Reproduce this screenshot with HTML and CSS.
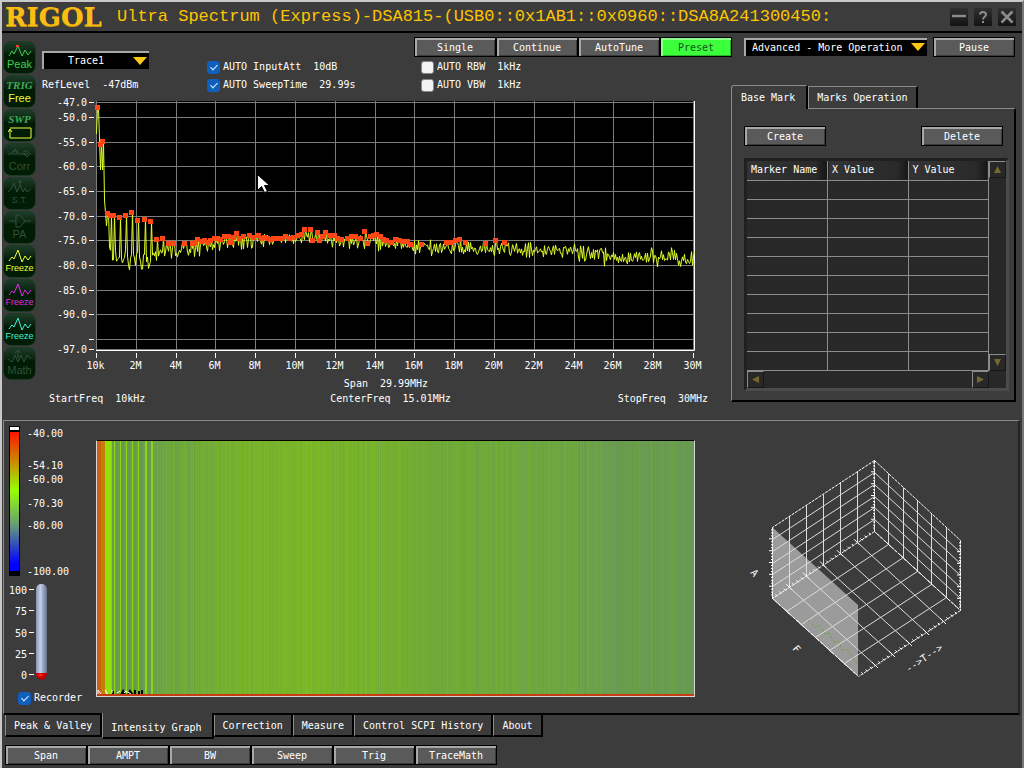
FILE: index.html
```
<!DOCTYPE html>
<html lang="en">
<head>
    <meta charset="UTF-8">
    <meta name="viewport" content="width=device-width, initial-scale=1.0">
    <title>Ultra Spectrum (Express)</title>
    <link rel="stylesheet" href="styles.css">
</head>
<body>
<div class="window">

    <header class="titlebar">
        <div class="logo">RIGOL</div>
        <h1>Ultra Spectrum (Express)-DSA815-(USB0::0x1AB1::0x0960::DSA8A241300450:</h1>
        <div class="window-buttons">
            <button aria-label="Minimize"><svg viewBox="0 0 18 18"><path d="M2 8h14" stroke-width="2.500"/></svg></button>
            <button aria-label="Help"><svg viewBox="0 0 18 18"><path d="M6 6.500C6 3 12 3 12 6.500C12 9 9 8.500 9 11.500M9 13v2" stroke-width="2"/></svg></button>
            <button aria-label="Close"><svg viewBox="0 0 18 18"><path d="M3.500 3.500l11 11M14.500 3.500l-11 11" stroke-width="2.500"/></svg></button>
        </div>
    </header>

    <main class="upper">
        <nav class="sidebar">
            <button class="side green"><svg viewBox="0 0 24 14"><path d="M1 12L4 7L6 10L10 2L14 12L17 6L20 11L23 7"/><path class="dot" d="M8 2h3"/></svg><span>Peak</span></button>
            <button class="side yellow"><em>TRIG</em><span>Free</span></button>
            <button class="side yellow"><em>SWP</em><svg viewBox="0 0 24 14"><path d="M2 12V3M0 6L2 3L4 6M2 2H23V12H2"/></svg></button>
            <button class="side off"><svg viewBox="0 0 24 14"><path d="M0 8H3L7 3L11 8H16L19 11L23 7M5 5h4v3h-4zM16 5h4v3h-4z"/></svg><span>Corr</span></button>
            <button class="side off"><svg viewBox="0 0 24 14"><path d="M0 12L3 9L6 3L9 12L12 5L15 12L17 8L19 12L23 9M12 0V5M10 2h4"/></svg><span class="tiny">S.T.</span></button>
            <button class="side off"><svg viewBox="0 0 24 14"><path d="M1 7H8M8 1V13H12L17 7L12 1ZM17 7H23"/></svg><span>PA</span></button>
            <button class="side yellow"><svg viewBox="0 0 24 14"><path d="M1 12L4 8L6 10L10 1L14 13L17 7L20 11L23 7"/></svg><span class="small">Freeze</span></button>
            <button class="side magenta"><svg viewBox="0 0 24 14"><path d="M1 12L4 8L6 10L10 1L14 13L17 7L20 11L23 7"/></svg><span class="small">Freeze</span></button>
            <button class="side cyan"><svg viewBox="0 0 24 14"><path d="M1 12L4 8L6 10L10 1L14 13L17 7L20 11L23 7"/></svg><span class="small">Freeze</span></button>
            <button class="side off"><svg viewBox="0 0 24 14"><path d="M0 9L4 12L7 5L10 12L13 5L16 12L19 5L23 9M10 0V8M7 3L10 0L13 3"/></svg><span>Math</span></button>
        </nav>

        <section class="trace">
            <div class="controls">
                <div class="trace-pick">
                    <div class="dropdown">
                        <select aria-label="Trace"><option>Trace1</option></select>
                    </div>
                    <p>RefLevel&nbsp; -47dBm</p>
                </div>
                <div class="auto-list">
                    <label><input type="checkbox" checked>AUTO InputAtt&nbsp; 10dB</label>
                    <label><input type="checkbox" checked>AUTO SweepTime&nbsp; 29.99s</label>
                </div>
                <div class="run-controls">
                    <div class="button-row">
                        <button class="btn">Single</button>
                        <button class="btn">Continue</button>
                        <button class="btn">AutoTune</button>
                        <button class="btn preset">Preset</button>
                    </div>
                    <label><input type="checkbox">AUTO RBW&nbsp; 1kHz</label>
                    <label><input type="checkbox">AUTO VBW&nbsp; 1kHz</label>
                </div>
            </div>
            <svg id="spectrum" class="spectrum" viewBox="41 94 690 280"></svg>
            <p class="span-text">Span&nbsp; 29.99MHz</p>
            <div class="freq-row">
                <span>StartFreq&nbsp; 10kHz</span>
                <span class="center-freq">CenterFreq&nbsp; 15.01MHz</span>
                <span>StopFreq&nbsp; 30MHz</span>
            </div>
        </section>

        <section class="marks">
            <div class="more-row">
                <div class="dropdown">
                    <select aria-label="More operation"><option>Advanced - More Operation</option></select>
                </div>
                <button class="btn">Pause</button>
            </div>
            <div class="mark-tabs">
                <button class="active">Base Mark</button>
                <button>Marks Operation</button>
            </div>
            <div class="mark-panel">
                <div class="mark-actions">
                    <button class="btn">Create</button>
                    <button class="btn">Delete</button>
                </div>
                <div class="table-frame">
                    <table>
                        <thead>
                            <tr><th>Marker Name</th><th>X Value</th><th>Y Value</th></tr>
                        </thead>
                        <tbody>
                            <tr><td></td><td></td><td></td></tr>
                            <tr><td></td><td></td><td></td></tr>
                            <tr><td></td><td></td><td></td></tr>
                            <tr><td></td><td></td><td></td></tr>
                            <tr><td></td><td></td><td></td></tr>
                            <tr><td></td><td></td><td></td></tr>
                            <tr><td></td><td></td><td></td></tr>
                            <tr><td></td><td></td><td></td></tr>
                            <tr><td></td><td></td><td></td></tr>
                            <tr><td></td><td></td><td></td></tr>
                        </tbody>
                    </table>
                    <div class="scroll vertical">
                        <button aria-label="Scroll up"><svg viewBox="0 0 8 8"><path d="M4 0L8 8H0Z"/></svg></button>
                        <button aria-label="Scroll down"><svg viewBox="0 0 8 8"><path d="M4 8L8 0H0Z"/></svg></button>
                    </div>
                    <div class="scroll horizontal">
                        <button aria-label="Scroll left"><svg viewBox="0 0 8 8"><path d="M0 4L8 0V8Z"/></svg></button>
                        <button aria-label="Scroll right"><svg viewBox="0 0 8 8"><path d="M8 4L0 0V8Z"/></svg></button>
                    </div>
                </div>
            </div>
        </section>
    </main>

    <section class="intensity">
        <div class="scales">
            <svg class="scale-art" viewBox="4 426 86 260">
                <defs>
                    <linearGradient id="ramp" x1="0" y1="0" x2="0" y2="1">
                        <stop offset="0" stop-color="#ff1400"/>
                        <stop offset="0.420" stop-color="#96ff00"/>
                        <stop offset="0.680" stop-color="#64967d"/>
                        <stop offset="0.950" stop-color="#0000ff"/>
                    </linearGradient>
                    <linearGradient id="tube">
                        <stop offset="0" stop-color="#8893ad"/>
                        <stop offset="0.400" stop-color="#c2cfea"/>
                        <stop offset="1" stop-color="#66708a"/>
                    </linearGradient>
                    <radialGradient id="bulb" cx="0.400" cy="0.300">
                        <stop offset="0" stop-color="#ff4040"/>
                        <stop offset="0.500" stop-color="#e00000"/>
                        <stop offset="1" stop-color="#b00000"/>
                    </radialGradient>
                </defs>
                <rect x="9" y="427" width="11" height="150"/>
                <rect x="10" y="428" width="9" height="3" fill="#fff"/>
                <rect x="10" y="433" width="9" height="139" fill="url(#ramp)"/>
                <g class="labels">
                    <text x="27" y="438">-40.00</text>
                    <text x="27" y="470">-54.10</text>
                    <text x="27" y="484">-60.00</text>
                    <text x="27" y="508">-70.30</text>
                    <text x="27" y="530">-80.00</text>
                    <text x="27" y="576">-100.00</text>
                </g>
                <rect x="36" y="585" width="11" height="94" rx="5" fill="url(#tube)"/>
                <path d="M36 674h11c0 9-11 9-11 0z" fill="url(#bulb)"/>
                <g class="labels end">
                    <text x="27" y="595">100</text>
                    <text x="27" y="616">75</text>
                    <text x="27" y="638">50</text>
                    <text x="27" y="659">25</text>
                    <text x="27" y="680">0</text>
                </g>
                <path class="ticks" d="M29 590.500h5M29 611.500h5M29 633.500h5M29 654.500h5M29 675.500h5"/>
            </svg>
            <label class="recorder"><input type="checkbox" checked>Recorder</label>
        </div>
        <svg id="waterfall" class="waterfall" viewBox="0 0 597 255" preserveAspectRatio="none"></svg>
        <svg id="cube" class="cube" viewBox="740 440 240 250"></svg>
    </section>

    <nav class="page-tabs">
        <button>Peak &amp; Valley</button>
        <button class="active">Intensity Graph</button>
        <button>Correction</button>
        <button>Measure</button>
        <button>Control SCPI History</button>
        <button>About</button>
    </nav>

    <footer class="button-row menu-row">
        <button class="btn">Span</button>
        <button class="btn">AMPT</button>
        <button class="btn">BW</button>
        <button class="btn">Sweep</button>
        <button class="btn">Trig</button>
        <button class="btn">TraceMath</button>
    </footer>
</div>

<script src="app.js"></script>
</body>
</html>
```
FILE: styles.css
```
* {
    box-sizing: border-box;
}

body {
    margin: 0;
    background: #3c3c3c;
    color: #fff;
    font-family: "DejaVu Sans Mono", "Liberation Mono", monospace;
    font-size: 10px;
    line-height: 14px;
}

button,
select,
input {
    font: inherit;
    color: inherit;
    margin: 0;
}

p {
    margin: 0;
}

.window {
    display: flex;
    flex-direction: column;
    min-height: 100vh;
    border: 2px solid #c8c8c8;
    border-right-color: #777;
    border-bottom-color: #777;
}

/* Title bar */
.titlebar {
    display: flex;
    align-items: center;
    height: 31px;
    padding: 0 6px 0 3px;
    border-bottom: 2px solid #000;
}

.logo {
    width: 112px;
    color: #f9bd14;
    font: bold 26px/28px "DejaVu Serif", "Liberation Serif", serif;
    text-shadow: 0 1px 0 #c8930c;
}

.titlebar h1 {
    flex: 1;
    margin: 0;
    color: #ffc400;
    font: 17px/26px "Liberation Mono", monospace;
    white-space: nowrap;
}

.window-buttons {
    display: flex;
    gap: 6px;
}

.window-buttons button {
    width: 18px;
    height: 18px;
    padding: 0;
    border: 0;
    background: linear-gradient(#303030, #141414);
}

.window-buttons svg {
    display: block;
    fill: none;
    stroke: #8c8c8c;
}

/* Shared controls */
.btn {
    width: 82px;
    height: 20px;
    padding: 2px 0 0;
    border: 1px solid #000;
    background: #5a5a5a;
    box-shadow: inset 2px 2px 0 #a8a8a8, inset -1px -1px 0 #3a3a3a;
    line-height: 16px;
    text-align: center;
}

.btn.preset {
    width: 72px;
    background: #3cff3c;
    box-shadow: inset 2px 2px 0 #8dff8d, inset -1px -1px 0 #28b428;
    color: #14501e;
}

.button-row {
    display: flex;
}

.dropdown {
    position: relative;
}

.dropdown select {
    display: block;
    width: 100%;
    height: 18px;
    padding: 0 20px 0 6px;
    appearance: none;
    border: 0 solid #a8a8a8;
    border-width: 2px 0 0 2px;
    border-radius: 0;
    background: #000;
}

.dropdown::after {
    content: "";
    position: absolute;
    top: 6px;
    right: 2px;
    width: 14px;
    height: 8px;
    background: #ffc814;
    clip-path: polygon(0 0, 100% 0, 50% 100%);
    pointer-events: none;
}

label {
    display: flex;
    align-items: center;
    height: 18px;
    white-space: pre;
}

input[type="checkbox"] {
    appearance: none;
    width: 13px;
    height: 13px;
    margin-right: 3px;
    border: 1px solid #888;
    border-radius: 3px;
    background: #f3f3f3;
    position: relative;
}

input[type="checkbox"]:checked {
    border-color: #0f5fbd;
    background: #0f5fbd;
}

input[type="checkbox"]:checked::after {
    content: "";
    position: absolute;
    left: 4px;
    top: 1px;
    width: 3px;
    height: 6px;
    border: solid #dfefff;
    border-width: 0 1px 1px 0;
    transform: rotate(45deg);
}

/* Upper area */
.upper {
    display: flex;
    padding-right: 6px;
}

.sidebar {
    display: flex;
    flex-direction: column;
    gap: 1px;
    width: 39px;
    padding: 8px 0 0 1px;
}

.side {
    display: flex;
    flex-direction: column;
    align-items: center;
    justify-content: center;
    width: 33px;
    height: 33px;
    padding: 0;
    border: 1px solid #1c3a24;
    border-radius: 8px;
    background: linear-gradient(#1d3c27, #0a2411 35%, #001c04 40%, #001c04);
    font: 11px/13px "Liberation Sans", Arial, sans-serif;
}

.side svg {
    width: 24px;
    height: 14px;
    fill: none;
    stroke: currentColor;
}

.side .dot {
    stroke: #ff3c28;
    stroke-width: 2;
}

.side em {
    color: #3fa957;
    font: italic bold 11px/14px "Liberation Serif", serif;
}

.side .small {
    font-size: 9px;
    line-height: 11px;
}

.side .tiny {
    font-size: 9px;
}

.side.green { color: #3fce4c; }
.side.yellow { color: #eeff3c; }
.side.magenta { color: #e628e6; }
.side.cyan { color: #46f0dc; }
.side.off { color: #2f5237; }

.trace {
    flex: 1;
    min-width: 0;
}

.controls {
    display: flex;
    height: 61px;
}

.trace-pick {
    flex: none;
    width: 166px;
    padding: 18px 58px 0 1px;
}

.trace-pick .dropdown select {
    padding-left: 24px;
}

.trace-pick p {
    margin-top: 9px;
    white-space: nowrap;
}

.auto-list {
    flex: none;
    width: 207px;
    padding-top: 25px;
}

.run-controls {
    padding-top: 4px;
}

.run-controls .button-row {
    margin-bottom: 1px;
}

.run-controls label {
    padding-left: 7px;
}

.spectrum {
    display: block;
    width: 100%;
    height: auto;
}

text {
    fill: #fff;
    font-size: 10px;
}

.end text {
    text-anchor: end;
}

.middle text {
    text-anchor: middle;
}

.ticks,
.edge {
    fill: none;
    stroke: #fff;
}

.grid {
    fill: none;
    stroke: #7d7d7d;
    shape-rendering: crispEdges;
}

.signal {
    fill: none;
    stroke: #e1ff28;
}

.peaks {
    fill: #ff4614;
}

.span-text {
    padding-top: 3px;
    text-align: center;
}

.freq-row {
    display: flex;
    justify-content: space-between;
    padding: 1px 23px 0 8px;
}

.center-freq {
    padding-left: 18px;
}

/* Marker panel */
.marks {
    width: 285px;
}

.more-row {
    display: flex;
    gap: 6px;
    padding: 4px 1px 0 13px;
}

.more-row .dropdown {
    flex: 1;
}

.more-row .dropdown select {
    margin-top: 1px;
}

.mark-tabs {
    display: flex;
    align-items: flex-end;
    margin-top: 28px;
}

.mark-tabs button {
    position: relative;
    height: 22px;
    padding: 0 8px;
    border: 1px solid #8c8c8c;
    border-right: 2px solid #000;
    border-bottom: 0;
    background: #3c3c3c;
}

.mark-tabs .active {
    z-index: 1;
    height: 24px;
    margin-bottom: -1px;
    padding: 0 11px 0 9px;
    border-radius: 3px 0 0;
}

.mark-panel {
    padding: 17px 5px 9px 12px;
    border: 1px solid #8c8c8c;
    border-right: 2px solid #000;
    border-bottom: 2px solid #000;
}

.mark-actions {
    display: flex;
    justify-content: space-between;
    margin-bottom: 12px;
    padding-right: 6px;
}

.table-frame {
    display: grid;
    grid-template-columns: 1fr 17px;
    border: solid #202020;
    border-width: 3px;
    border-right-color: #4b4b4b;
    border-bottom-color: #4b4b4b;
    background: #282828;
}

table {
    width: 100%;
    border-collapse: collapse;
    table-layout: fixed;
}

th,
td {
    height: 19px;
    padding: 0 4px;
    border: 1px solid #8c8c8c;
    border-top: 0;
    border-left: 0;
    font-weight: normal;
    text-align: left;
    white-space: nowrap;
}

th {
    background: linear-gradient(90deg, #333, #2a2a2a 85%, #161616);
}

.scroll {
    display: flex;
    justify-content: space-between;
}

.vertical {
    flex-direction: column;
}

.scroll button {
    width: 17px;
    height: 17px;
    padding: 4px;
    border: solid #161616;
    border-width: 1px;
    border-top-color: #8c8c8c;
    border-left-color: #8c8c8c;
    background: #282828;
}

.scroll svg {
    display: block;
    fill: #75692f;
}

/* Intensity page */
.intensity {
    display: flex;
    align-items: flex-start;
    height: 295px;
    margin: 14px 2px 0 1px;
    padding: 4px 38px 0 0;
    border-top: 1px solid #8c8c8c;
    border-left: 1px solid #8c8c8c;
    border-right: 2px solid #222;
    border-bottom: 2px solid #000;
}

.scales {
    width: 92px;
}

.scale-art {
    display: block;
    width: 86px;
    height: 260px;
}

.recorder {
    margin-top: 4px;
    padding-left: 14px;
}

.waterfall {
    flex: 1;
    min-width: 0;
    height: 257px;
    margin-top: 15px;
    border: 1px solid #d7d7d7;
    border-top-color: #000;
}

.cube {
    width: 240px;
    height: 250px;
    margin: 15px 0 0 45px;
}

.wall {
    fill: none;
    stroke: #dcdcdc;
}

.edge {
    stroke-dasharray: 3 1;
}

/* Bottom tabs */
.page-tabs {
    display: flex;
    align-items: flex-start;
    padding-left: 3px;
    height: 24px;
}

.page-tabs button {
    height: 22px;
    padding: 2px 8px 0;
    border: solid #000;
    border-width: 0 2px 2px 1px;
    border-left-color: #8c8c8c;
    background: #3c3c3c;
}

.page-tabs .active {
    position: relative;
    height: 26px;
    margin-top: -2px;
    padding-top: 6px;
    padding-right: 10px;
}

.menu-row {
    padding: 6px 0 3px 3px;
}

/* Mouse pointer */
.pointer {
    fill: #fff;
    stroke: #000;
}
```
FILE: app.js
```
// small repeatable noise source
let seed = 815;
function noise() {
    seed = (seed * 16807) % 2147483647;
    return seed / 2147483647 - 0.5;
}

const floor = [[96, 250], [156, 251], [190, 248], [230, 242], [310, 239], [380, 242], [430, 247], [500, 247], [560, 250], [620, 256], [694, 258]];
const head = [[96, 134], [97, 108], [98, 108], [100, 170], [101, 144], [102, 170], [103, 141], [104, 200], [106, 226], [107, 213]];
const spikes = [[108, 213], [111, 215], [114, 215], [120, 217], [126, 215], [132, 212], [138, 220], [145, 219], [151, 221]];
const peaks = [[98, 107], [101, 144], [103, 141], [108, 213], [111, 215], [114, 215], [120, 217], [126, 215], [132, 212], [138, 220],
    [145, 219], [151, 221], [157, 239], [163, 238], [169, 243], [174, 243], [185, 243], [193, 243], [196, 242], [198, 239],
    [202, 241], [205, 240], [208, 242], [211, 240], [215, 238], [218, 238], [221, 239], [225, 236], [229, 236], [231, 242],
    [234, 237], [237, 233], [240, 238], [244, 236], [250, 235], [254, 237], [259, 235], [262, 238], [265, 237], [268, 238],
    [271, 239], [274, 238], [278, 238], [282, 238], [286, 236], [290, 238], [294, 237], [298, 235], [302, 234], [305, 229],
    [311, 229], [313, 240], [318, 232], [320, 240], [323, 236], [326, 232], [330, 235], [335, 235], [338, 238], [342, 239],
    [348, 238], [352, 236], [356, 236], [361, 238], [365, 231], [368, 243], [371, 236], [374, 235], [377, 234], [381, 236],
    [384, 239], [387, 240], [392, 242], [396, 239], [400, 240], [404, 241], [408, 241], [411, 244], [422, 244], [447, 242],
    [452, 242], [456, 240], [460, 239], [466, 242], [486, 243], [496, 240], [505, 242]];

function interpolate(points, x) {
    for (let i = 1; i < points.length; i++) {
        const [x0, y0] = points[i - 1];
        const [x1, y1] = points[i];
        if (x <= x1) return y0 + (y1 - y0) * (x - x0) / (x1 - x0);
    }
    return points[points.length - 1][1];
}

// one level for each plot column
const level = [];
for (let x = 96; x <= 694; x++) {
    const hit = peaks.find(p => p[0] === x);
    if (x < 108) {
        level.push(interpolate(head, x));
    } else if (x < 153) {
        const spike = spikes.find(p => p[0] === x);
        const near = spikes.some(p => Math.abs(p[0] - x) === 1);
        level.push(spike ? spike[1] : (near ? 255 : 262) + noise() * 16);
    } else if (hit) {
        level.push(hit[1]);
    } else {
        const spread = x > 600 ? 17 : 12;
        level.push(interpolate(floor, x) + 1 + (noise() + noise() * 0.5) * spread);
    }
}

// Spectrum
function drawSpectrum() {
    let grid = '';
    let ticks = '';
    let yLabels = '';
    let xLabels = '';
    for (const db of [-47, -50, -55, -60, -65, -70, -75, -80, -85, -90, -95, -97]) {
        const y = Math.round(102 + (-47 - db) * 4.94) + 0.5;
        grid += `M96 ${y}H694`;
        ticks += `M89 ${y}h5`;
        if (db !== -95) yLabels += `<text x="87" y="${y + 3.5}">${db}.0</text>`;
    }
    for (let f = 0; f <= 30; f += 2) {
        const x = Math.round(96 + f * 19.9) + 0.5;
        grid += `M${x} 101V350`;
        ticks += `M${x} 353v5`;
        xLabels += `<text x="${x - 1}" y="369">${f ? f + 'M' : '10k'}</text>`;
    }
    const line = level.map((y, i) => `${96.5 + i},${y.toFixed(1)}`).join(' ');
    const squares = peaks.map(([x, y]) => `<rect x="${x - 3}" y="${y - 2}" width="5" height="5"/>`).join('');
    document.getElementById('spectrum').innerHTML = `
        <rect x="96" y="101" width="598" height="249"/>
        <path class="grid" d="${grid}"/>
        <path class="ticks" d="${ticks}M96 350.5H694.5V101"/>
        <g class="end">${yLabels}</g>
        <g class="middle">${xLabels}</g>
        <polyline class="signal" points="${line}"/>
        <g class="peaks">${squares}</g>
        <path class="pointer" d="M257.5 174.500v16l4-4l3 6l3-1l-3-6h5z"/>`;
}

// Intensity graph
const ramp = [[108, [208, 96, 16]], [150, [190, 130, 10]], [195, [150, 225, 10]], [222, [140, 210, 20]], [240, [121, 180, 42]], [250, [110, 168, 62]], [260, [104, 154, 82]], [275, [96, 146, 92]]];
function heat(y) {
    const channel = i => Math.round(interpolate(ramp.map(r => [r[0], r[1][i]]), Math.max(y, 108)));
    return `rgb(${channel(0)},${channel(1)},${channel(2)})`;
}

function drawWaterfall() {
    let bars = '';
    for (let i = 0; i < 597; i++) {
        const x = 97 + i;
        let y = level[i + 1];
        if (x < 101) y = 108;
        else if (x < 105) y = 150;
        else if (x < 111) y = 197;
        else if (x < 153) y = spikes.some(p => p[0] === x || (p[0] === x - 1 && x > 140)) ? 218 : Math.min(y, 262);
        else y = interpolate(floor, x) + (y - interpolate(floor, x)) * 0.6 + 1;
        bars += `<rect x="${i}" y="0" width="1.2" height="255" fill="${heat(y)}"/>`;
    }
    document.getElementById('waterfall').innerHTML = bars + `
        <path d="M16 254V250M24 254l2-4l2 4M31 254l2-4l3 4M38 249v5M42 250v4M45 249v5" fill="none" stroke="#000" stroke-width="2"/>
        <path d="M1 254V249L4 253M8 249l3 5M15 249v3M20 252l3-2M27 252l2-2l5 3" fill="none" stroke="#fff"/>
        <rect x="0" y="253" width="597" height="2" fill="#c83c14"/>`;
}

// 3D view
function drawCube() {
    const mix = (a, b, t) => [a[0] + (b[0] - a[0]) * t, a[1] + (b[1] - a[1]) * t];
    const line = (a, b) => `M${a.map(v => Math.round(v) + 0.5)}L${b.map(v => Math.round(v) + 0.5)}`;
    const T = [874, 460], B = [874, 531], L = [772, 527], L2 = [772, 598];
    const R = [960, 540], R2 = [960, 610], F = [858, 676];
    let wall = '';
    let ticks = '';
    for (let k = 1; k < 6; k++) {
        const t = k / 6;
        wall += line(mix(T, L, t), mix(B, L2, t)) + line(mix(T, R, t), mix(B, R2, t));
        wall += line(mix(B, T, t), mix(L2, L, t)) + line(mix(B, T, t), mix(R2, R, t));
        wall += line(mix(B, L2, t), mix(R2, F, t)) + line(mix(B, R2, t), mix(L2, F, t));
    }
    for (let k = 1; k < 24; k++) {
        const t = k / 24;
        const size = k % 4 ? 1 : 3;
        for (const [a, b] of [[B, L2], [B, R2], [L2, F], [R2, F]]) {
            const [x, y] = mix(a, b, t);
            ticks += `M${(x - size).toFixed(1)} ${(y - size).toFixed(1)}l${size * 2} ${size * 2}`;
        }
        for (const [a, b] of [[T, B], [R, R2], [L, L2]]) {
            const [x, y] = mix(a, b, t);
            ticks += `M${x - size} ${y.toFixed(1)}h${size + 1}`;
        }
    }
    document.getElementById('cube').innerHTML = `
        <path d="M772 527L858 605V676L772 598Z" fill="#9b9b9b"/>
        <path class="wall" d="${wall}"/>
        <path class="edge" d="${line(T, L)}${line(T, R)}${line(T, B)}${line(B, L2)}${line(B, R2)}${line(R, R2)}${line(L2, F)}${line(R2, F)}${line(L, L2)}"/>
        <path class="ticks" d="${ticks}"/>
        <path d="M808 620l8 8l3-3l6 9l3-2l6 10l4-1l5 9l4-1l10 15" fill="none" stroke="#6ea53c" stroke-dasharray="3 2"/>
        <g class="middle">
            <text transform="translate(752 575) rotate(50)">A</text>
            <text transform="translate(794 651) rotate(50)">F</text>
            <text transform="translate(926 661) rotate(-34)">--&gt;T--&gt;</text>
        </g>`;
}

drawSpectrum();
drawWaterfall();
drawCube();
```
